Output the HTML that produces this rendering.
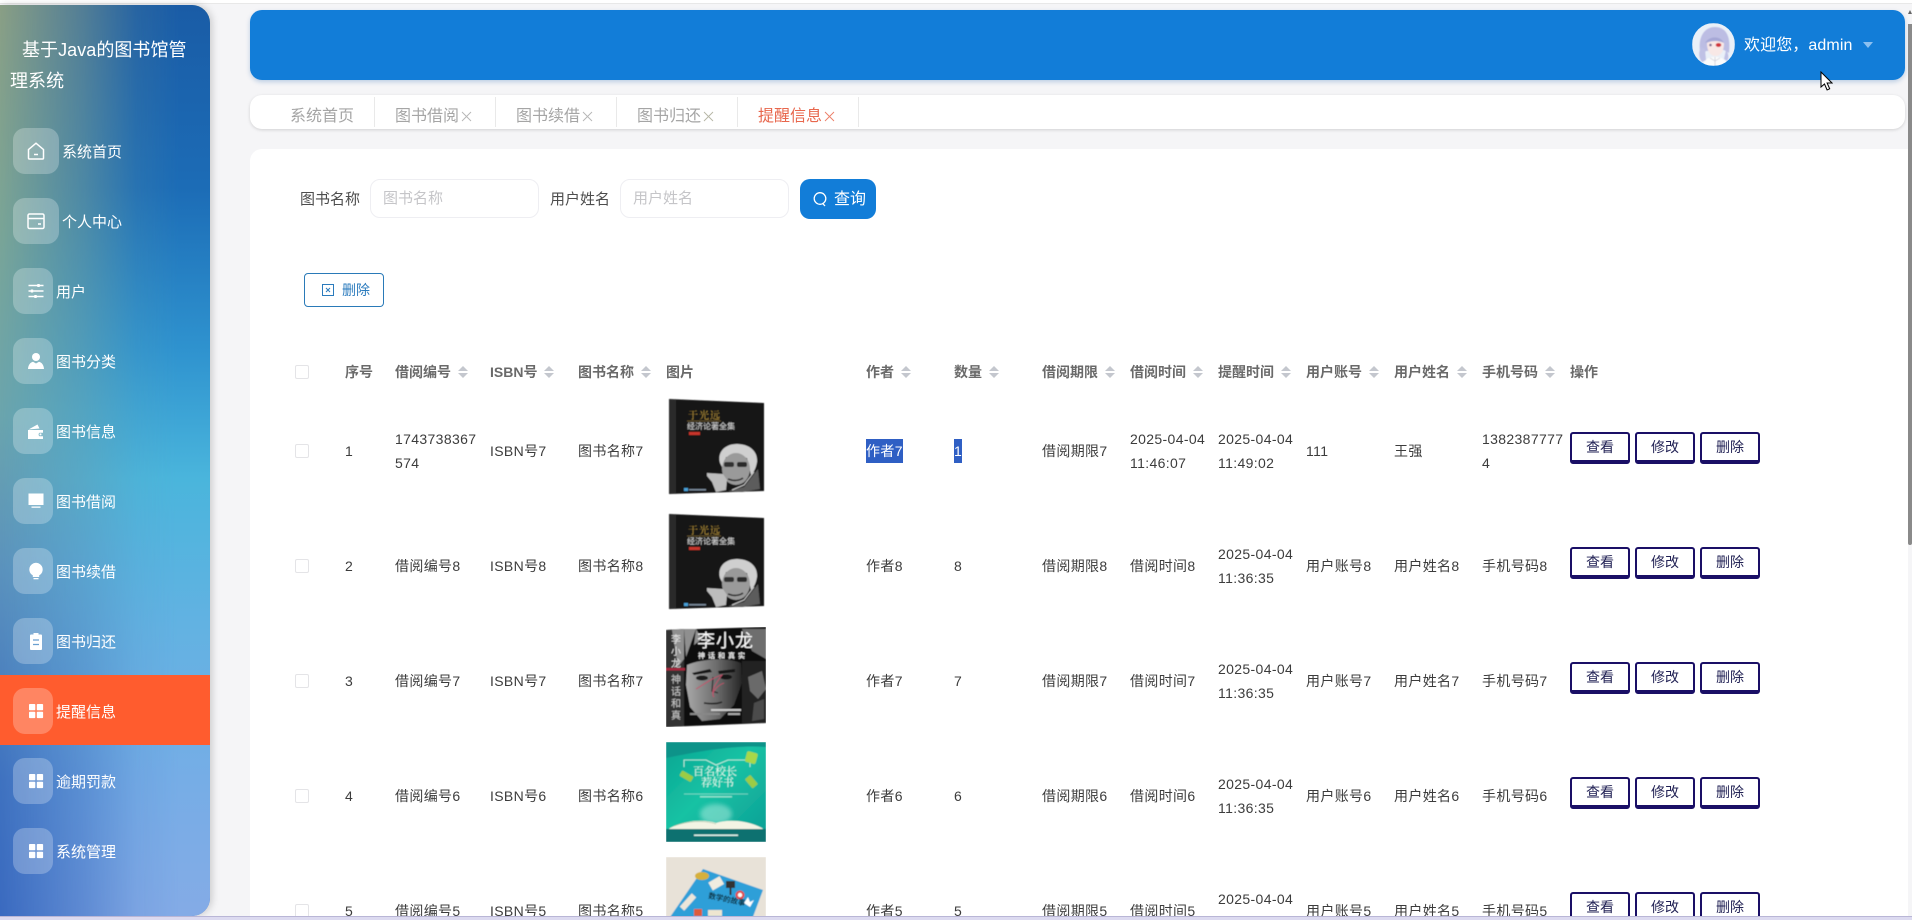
<!DOCTYPE html>
<html lang="zh"><head><meta charset="utf-8"><title>基于Java的图书馆管理系统</title>
<style>
*{box-sizing:border-box}
html,body{margin:0;padding:0;width:1912px;height:920px;overflow:hidden;background:#f5f5f7;font-family:"Liberation Sans","Noto Sans CJK SC",sans-serif}
.abs,.abs>*{position:absolute}
#top{left:0;top:0;width:1912px;height:4px;background:#fff;border-bottom:1px solid #e8e8e8}
#bottom{left:0;top:916px;width:1912px;height:4px;background:#dcdaf0;border-top:1px solid #b9b6d6;z-index:9}
#side{position:absolute;left:0;top:5px;width:210px;height:911px;border-radius:0 18px 18px 0;overflow:hidden;box-shadow:2px 0 8px rgba(0,0,0,.18);z-index:3;background:linear-gradient(180deg,#8a9f85 0%,#7aa597 25%,#6ba5ad 45%,#5b92bd 62%,#3f72c0 85%,#3a6ac0 100%)}
#side .ov{position:absolute;inset:0;background:linear-gradient(180deg,#1a5ca6 0%,#1c6cb6 20%,#2f93cf 38%,#4ab5dc 52%,#62b2e2 68%,#76ade6 85%,#84abe6 100%);-webkit-mask-image:linear-gradient(90deg,rgba(0,0,0,0) 0%,rgba(0,0,0,.5) 40%,rgba(0,0,0,.88) 65%,#000 85%);mask-image:linear-gradient(90deg,rgba(0,0,0,0) 0%,rgba(0,0,0,.5) 40%,rgba(0,0,0,.88) 65%,#000 85%)}
#title{position:absolute;left:10px;top:30px;width:190px;color:#fff;font-size:18px;line-height:31px;text-indent:12px;white-space:normal;letter-spacing:.05px}
.act{position:absolute;left:0;top:670px;width:210px;height:70px;background:#ff5c2e}
.ib{position:absolute;left:13px;width:40px;height:46px;border-radius:12px;background:rgba(255,255,255,.25)}
.ib.w{width:46px}
.ib svg{position:absolute;left:14px;top:14px;width:18px;height:18px}
.mt{position:absolute;left:56px;color:#fff;font-size:15px;line-height:20px;white-space:nowrap;margin-top:1.500px}
#hd{left:250px;top:10px;width:1655px;height:70px;background:#127dd8;border-radius:12px;box-shadow:0 2px 5px rgba(18,90,170,.25)}
#welcome{position:absolute;left:1744px;top:34px;color:#fff;font-size:16px;line-height:24px;white-space:nowrap;z-index:4;letter-spacing:.1px}
#tabs{left:250px;top:95px;width:1655px;height:34px;background:#fff;border-radius:12px;box-shadow:0 1px 3px rgba(0,0,0,.15)}
.tab{position:absolute;top:2px;height:30px;border-right:1px solid #e9e9e9;font-size:16px;line-height:39px;color:#a5a5a5;white-space:nowrap}
.x{display:inline-block;width:11px;height:11px;margin-left:2px;vertical-align:-1px}
.x svg{display:block;width:11px;height:11px}
#main{left:250px;top:149px;width:1658px;height:767px;background:#fff;border-radius:12px 0 0 0;overflow:hidden}
.lbl{position:absolute;font-size:15px;line-height:20px;color:#4d4d4d;white-space:nowrap}
.inp{position:absolute;height:39px;top:30px;border:1px solid #eeeef2;border-radius:10px;font-size:15px;color:#c5c5c8;line-height:38px;padding-left:12px;background:#fff}
#q{position:absolute;left:550px;top:30px;width:76px;height:40px;border-radius:10px;background:#127dd8;color:#fff;font-size:16px;line-height:41px;padding-left:34px}
#del{position:absolute;left:54px;top:124px;width:80px;height:34px;border:1px solid #2a7ab8;border-radius:4px;color:#2b7bbd;font-size:14px;line-height:33px;padding-left:37px}
.t{position:absolute;left:-250px;top:-149px;width:1912px;height:920px}
.h{position:absolute;top:362px;font-size:14px;font-weight:700;color:#6a6a6a;line-height:20px;white-space:nowrap}
.s{display:inline-block;width:10px;height:11px;margin-left:7px;vertical-align:-1px;position:relative}
.s:before,.s:after{content:"";position:absolute;left:0;border-left:5px solid transparent;border-right:5px solid transparent}
.s:before{top:-1px;border-bottom:5px solid #c4c7ce}
.s:after{top:6px;border-top:5px solid #c4c7ce}
.cb{position:absolute;left:295px;width:14px;height:14px;border:1px solid #e4e4e7;border-radius:2px;background:#fff}
.r{position:absolute;left:0;height:0;width:1912px}
.c{position:absolute;top:0;transform:translateY(-50%);line-height:24px;font-size:14px;color:#3c3c3c;white-space:nowrap;letter-spacing:.35px}
.c .sel{background:#2f5fc4;color:#fff;display:inline-block;height:24px}
.b{position:absolute;width:60px;height:32px;top:-19px;border:2px solid #1a0f66;border-bottom-width:4px;border-radius:3px;background:#fff;text-align:center;font-size:14px;line-height:26px;color:#222255}
.b1{left:1570px}.b2{left:1635px}.b3{left:1700px}
.img{position:absolute;left:666px;width:100px;height:100px;overflow:hidden}
.img svg{display:block;width:100px;height:100px}
#sb{position:absolute;left:1908px;top:24px;width:4px;height:521px;background:#8a8a8a;border-radius:0 0 2px 2px;z-index:5}
#sba{position:absolute;left:1908px;top:10px;width:0;height:0;border-left:2px solid transparent;border-right:2px solid transparent;border-bottom:4px solid #666;z-index:5}
</style></head><body>
<svg width="0" height="0" style="position:absolute"><defs>
 <filter id="bl" x="-5%" y="-5%" width="110%" height="110%"><feGaussianBlur stdDeviation=".6"/></filter>
 <filter id="bl2" x="-30%" y="-30%" width="160%" height="160%"><feGaussianBlur stdDeviation="2.500"/></filter>
 <linearGradient id="tg" x1="0" y1="0" x2="1" y2="1"><stop offset="0" stop-color="#09a592"/><stop offset=".45" stop-color="#17c2a4"/><stop offset="1" stop-color="#0d9d95"/></linearGradient>
 <linearGradient id="fg" x1="0" y1="0" x2="1" y2="0"><stop offset="0" stop-color="#a8a8a8"/><stop offset=".55" stop-color="#6c6c6c"/><stop offset="1" stop-color="#262626"/></linearGradient>
</defs></svg>
<div id="top" class="abs" style="position:absolute"></div>

<div id="side">
 <div class="ov"></div>
 <div id="title">基于Java的图书馆管理系统</div>
 <div class="act"></div>

 <div class="ib w" style="top:123px"><svg viewBox="0 0 18 18" fill="none" stroke="#fff" stroke-width="1.500"><path d="M1.500 7.600 9 1.200l7.500 6.400V16a1 1 0 0 1-1 1H2.500a1 1 0 0 1-1-1Z"/><path d="M7 12.500h4"/></svg></div>
 <div class="mt" style="left:62px;top:136px">系统首页</div>
 <div class="ib w" style="top:193px"><svg viewBox="0 0 18 18" fill="none" stroke="#fff" stroke-width="1.500"><rect x="1" y="2" width="16" height="14.500" rx="1.500"/><path d="M1 6.500h16M11 12h3"/></svg></div>
 <div class="mt" style="left:62px;top:206px">个人中心</div>
 <div class="ib" style="top:263px"><svg viewBox="0 0 18 18" fill="none" stroke="#fff" stroke-width="1.400"><path d="M1.500 3.500h15M1.500 9h15M1.500 14.500h15"/><path d="M11.500 2v3M5 7.500v3M8.500 13v3" stroke-width="2.400"/></svg></div>
 <div class="mt" style="top:276px">用户</div>
 <div class="ib" style="top:333px"><svg viewBox="0 0 18 18" fill="#fff"><circle cx="9" cy="5" r="4"/><path d="M1 17c.3-4 2.200-6.500 5-7.200L9 11.500l3-1.700c2.800.7 4.700 3.200 5 7.200Z"/></svg></div>
 <div class="mt" style="top:346px">图书分类</div>
 <div class="ib" style="top:403px"><svg viewBox="0 0 18 18" fill="#fff"><path d="M1.500 7.500 10.500 2.500l2 4Zm-.5.500h15v2.800h-3.500a2 2 0 0 0 0 3.400H16V17H1Z"/><circle cx="13.500" cy="12.400" r="1"/></svg></div>
 <div class="mt" style="top:416px">图书信息</div>
 <div class="ib" style="top:473px"><svg viewBox="0 0 18 18" fill="#fff"><rect x="1.500" y="1.500" width="15" height="11.500"/><rect x="4.500" y="14.500" width="9" height="1.300"/></svg></div>
 <div class="mt" style="top:486px">图书借阅</div>
 <div class="ib" style="top:543px"><svg viewBox="0 0 18 18" fill="#fff"><path d="M9 .8a6.700 6.700 0 0 1 3.200 12.600V15H5.800v-1.600A6.700 6.700 0 0 1 9 .8Z"/><rect x="6.500" y="16" width="5" height="1.300"/></svg></div>
 <div class="mt" style="top:556px">图书续借</div>
 <div class="ib" style="top:613px"><svg viewBox="0 0 18 18"><path fill="#fff" d="M6.500 1h5v1.500h2.500a1 1 0 0 1 1 1V17a1 1 0 0 1-1 1H4a1 1 0 0 1-1-1V3.500a1 1 0 0 1 1-1h2.500Z"/><path d="M6 8h6M6 12.500h6" stroke="#6a9fd0" stroke-width="1.300"/></svg></div>
 <div class="mt" style="top:626px">图书归还</div>
 <div class="ib" style="top:683px"><svg viewBox="0 0 18 18" fill="#fff"><rect x="2" y="2" width="6.300" height="6.300" rx=".8"/><rect x="9.800" y="2" width="6.300" height="6.300" rx=".8"/><rect x="2" y="9.800" width="6.300" height="6.300" rx=".8"/><rect x="9.800" y="9.800" width="6.300" height="6.300" rx=".8"/></svg></div>
 <div class="mt" style="top:696px">提醒信息</div>
 <div class="ib" style="top:753px"><svg viewBox="0 0 18 18" fill="#fff"><rect x="2" y="2" width="6.300" height="6.300" rx=".8"/><rect x="9.800" y="2" width="6.300" height="6.300" rx=".8"/><rect x="2" y="9.800" width="6.300" height="6.300" rx=".8"/><rect x="9.800" y="9.800" width="6.300" height="6.300" rx=".8"/></svg></div>
 <div class="mt" style="top:766px">逾期罚款</div>
 <div class="ib" style="top:823px"><svg viewBox="0 0 18 18" fill="#fff"><rect x="2" y="2" width="6.300" height="6.300" rx=".8"/><rect x="9.800" y="2" width="6.300" height="6.300" rx=".8"/><rect x="2" y="9.800" width="6.300" height="6.300" rx=".8"/><rect x="9.800" y="9.800" width="6.300" height="6.300" rx=".8"/></svg></div>
 <div class="mt" style="top:836px">系统管理</div>
</div>

<div id="hd" style="position:absolute"></div>
<svg style="position:absolute;left:1692px;top:23px;z-index:4" width="43" height="43" viewBox="0 0 43 43">
 <defs><clipPath id="av"><circle cx="21.500" cy="21.500" r="21.500"/></clipPath></defs>
 <g clip-path="url(#av)"><g filter="url(#bl)">
  <rect width="43" height="43" fill="#eaf0f8"/>
  <path d="M9 33C5 18 10 4 23 4c12 0 16 11 14 26l-5-3-18 1Z" fill="#bcbde3"/>
  <path d="M15 20c3-2 13-3 17 0 0 8-3 13-8.500 13S15 28 15 20Z" fill="#f8e8e6"/>
  <path d="M13 20c4-7 15-8 19 0-6-3-13-3-19 0Z" fill="#a5a7d6"/>
  <path d="M11 43c0-6 5-9 12-9s12 3 12 9Z" fill="#fbfbfb"/>
  <path d="M23 34v9M18 35l5 3 5-3" stroke="#c8c8d4" stroke-width=".7" fill="none"/>
  <ellipse cx="26.500" cy="22" rx="2.800" ry="2" fill="#d0353e"/>
  <circle cx="18.500" cy="22" r="1.300" fill="#7a6a92"/>
  <path d="M9 24c-3 6-2 11 1 15l4-2-1-11ZM34 27c3 4 3 8 1 11l-3-2Z" fill="#bfc1e5"/>
 </g></g>
</svg>
<div id="welcome">欢迎您，admin</div>
<div style="position:absolute;left:1863px;top:42px;width:0;height:0;border-left:5px solid transparent;border-right:5px solid transparent;border-top:6px solid #8cc0f0;z-index:4"></div>

<div id="tabs" style="position:absolute">
 <div class="tab" style="left:0;width:125px;padding-left:40px">系统首页</div>
 <div class="tab" style="left:125px;width:121px;padding-left:20px">图书借阅<span class="x"><svg viewBox="0 0 11 11"><path d="M1 1l9 9M10 1l-9 9" stroke="#b5b5b5" stroke-width=".9"/></svg></span></div>
 <div class="tab" style="left:246px;width:121px;padding-left:20px">图书续借<span class="x"><svg viewBox="0 0 11 11"><path d="M1 1l9 9M10 1l-9 9" stroke="#b5b5b5" stroke-width=".9"/></svg></span></div>
 <div class="tab" style="left:367px;width:121px;padding-left:20px">图书归还<span class="x"><svg viewBox="0 0 11 11"><path d="M1 1l9 9M10 1l-9 9" stroke="#b5b5a5" stroke-width=".9"/></svg></span></div>
 <div class="tab" style="left:488px;width:121px;padding-left:20px;color:#e8674d">提醒信息<span class="x"><svg viewBox="0 0 11 11"><path d="M1 1l9 9M10 1l-9 9" stroke="#ec7e68" stroke-width=".9"/></svg></span></div>
</div>

<div id="main" style="position:absolute">
 <div class="lbl" style="left:50px;top:41px">图书名称</div>
 <div class="inp" style="left:120px;width:169px">图书名称</div>
 <div class="lbl" style="left:300px;top:41px">用户姓名</div>
 <div class="inp" style="left:370px;width:169px">用户姓名</div>
 <div id="q"><svg style="position:absolute;left:12px;top:12px" width="16" height="16" viewBox="0 0 16 16" fill="none" stroke="#fff" stroke-width="1.300"><circle cx="8" cy="7.500" r="5.800"/><path d="M11 12.800 13 15"/></svg>查询</div>
 <div id="del"><svg style="position:absolute;left:17px;top:10px" width="12" height="12" viewBox="0 0 12 12" fill="none" stroke="#2b7bbd" stroke-width="1"><rect x=".5" y=".5" width="11" height="11"/><path d="M4 4l4 4M8 4l-4 4"/></svg>删除</div>

 <div class="t">
  <div class="cb" style="top:365px"></div>
  <div class="h" style="left:345px">序号</div>
  <div class="h" style="left:395px">借阅编号<i class="s"></i></div>
  <div class="h" style="left:490px">ISBN号<i class="s"></i></div>
  <div class="h" style="left:578px">图书名称<i class="s"></i></div>
  <div class="h" style="left:666px">图片</div>
  <div class="h" style="left:866px">作者<i class="s"></i></div>
  <div class="h" style="left:954px">数量<i class="s"></i></div>
  <div class="h" style="left:1042px">借阅期限<i class="s"></i></div>
  <div class="h" style="left:1130px">借阅时间<i class="s"></i></div>
  <div class="h" style="left:1218px">提醒时间<i class="s"></i></div>
  <div class="h" style="left:1306px">用户账号<i class="s"></i></div>
  <div class="h" style="left:1394px">用户姓名<i class="s"></i></div>
  <div class="h" style="left:1482px">手机号码<i class="s"></i></div>
  <div class="h" style="left:1570px">操作</div>

  <div class="cb" style="top:444px"></div><div class="cb" style="top:559px"></div><div class="cb" style="top:674px"></div><div class="cb" style="top:789px"></div><div class="cb" style="top:904px"></div>

  <div class="r" style="top:451px">
   <span class="c" style="left:345px">1</span><span class="c" style="left:395px">1743738367<br>574</span><span class="c" style="left:490px">ISBN号7</span><span class="c" style="left:578px">图书名称7</span>
   <span class="c" style="left:866px"><span class="sel">作者7</span></span><span class="c" style="left:954px"><span class="sel">1</span></span><span class="c" style="left:1042px">借阅期限7</span>
   <span class="c" style="left:1130px">2025-04-04<br>11:46:07</span><span class="c" style="left:1218px">2025-04-04<br>11:49:02</span><span class="c" style="left:1306px">111</span><span class="c" style="left:1394px">王强</span><span class="c" style="left:1482px">1382387777<br>4</span>
   <div class="b b1">查看</div><div class="b b2">修改</div><div class="b b3">删除</div>
  </div>
  <div class="r" style="top:566px">
   <span class="c" style="left:345px">2</span><span class="c" style="left:395px">借阅编号8</span><span class="c" style="left:490px">ISBN号8</span><span class="c" style="left:578px">图书名称8</span>
   <span class="c" style="left:866px">作者8</span><span class="c" style="left:954px">8</span><span class="c" style="left:1042px">借阅期限8</span>
   <span class="c" style="left:1130px">借阅时间8</span><span class="c" style="left:1218px">2025-04-04<br>11:36:35</span><span class="c" style="left:1306px">用户账号8</span><span class="c" style="left:1394px">用户姓名8</span><span class="c" style="left:1482px">手机号码8</span>
   <div class="b b1">查看</div><div class="b b2">修改</div><div class="b b3">删除</div>
  </div>
  <div class="r" style="top:681px">
   <span class="c" style="left:345px">3</span><span class="c" style="left:395px">借阅编号7</span><span class="c" style="left:490px">ISBN号7</span><span class="c" style="left:578px">图书名称7</span>
   <span class="c" style="left:866px">作者7</span><span class="c" style="left:954px">7</span><span class="c" style="left:1042px">借阅期限7</span>
   <span class="c" style="left:1130px">借阅时间7</span><span class="c" style="left:1218px">2025-04-04<br>11:36:35</span><span class="c" style="left:1306px">用户账号7</span><span class="c" style="left:1394px">用户姓名7</span><span class="c" style="left:1482px">手机号码7</span>
   <div class="b b1">查看</div><div class="b b2">修改</div><div class="b b3">删除</div>
  </div>
  <div class="r" style="top:796px">
   <span class="c" style="left:345px">4</span><span class="c" style="left:395px">借阅编号6</span><span class="c" style="left:490px">ISBN号6</span><span class="c" style="left:578px">图书名称6</span>
   <span class="c" style="left:866px">作者6</span><span class="c" style="left:954px">6</span><span class="c" style="left:1042px">借阅期限6</span>
   <span class="c" style="left:1130px">借阅时间6</span><span class="c" style="left:1218px">2025-04-04<br>11:36:35</span><span class="c" style="left:1306px">用户账号6</span><span class="c" style="left:1394px">用户姓名6</span><span class="c" style="left:1482px">手机号码6</span>
   <div class="b b1">查看</div><div class="b b2">修改</div><div class="b b3">删除</div>
  </div>
  <div class="r" style="top:911px">
   <span class="c" style="left:345px">5</span><span class="c" style="left:395px">借阅编号5</span><span class="c" style="left:490px">ISBN号5</span><span class="c" style="left:578px">图书名称5</span>
   <span class="c" style="left:866px">作者5</span><span class="c" style="left:954px">5</span><span class="c" style="left:1042px">借阅期限5</span>
   <span class="c" style="left:1130px">借阅时间5</span><span class="c" style="left:1218px">2025-04-04<br>11:36:35</span><span class="c" style="left:1306px">用户账号5</span><span class="c" style="left:1394px">用户姓名5</span><span class="c" style="left:1482px">手机号码5</span>
   <div class="b b1">查看</div><div class="b b2">修改</div><div class="b b3">删除</div>
  </div>

  <div class="img" style="top:397px"><svg viewBox="0 0 100 100"><g filter="url(#bl)">
   <polygon points="3,2 98,6 98,94 3,97" fill="#141414"/><polygon points="3,2 10,3 10,96 3,97" fill="#2c2c2c"/>
   <path d="M54 66c-3-11 5-19 17-19 12 0 21 7 20 18-1 6-3 10-6 13l-4-17-21-1-3 12Z" fill="#cfcfcf"/>
   <ellipse cx="70" cy="72" rx="14" ry="16" fill="#9a9a9a"/>
   <rect x="58" y="65" width="10" height="5" rx="2" fill="#333"/><rect x="71" y="65" width="10" height="5" rx="2" fill="#2a2a2a"/>
   <path d="M62 82c5 2 11 2 15-1" stroke="#2c2c2c" stroke-width="1.600" fill="none"/>
   <path d="M41 76l16 1 4 6-1 10-10 2-4-10-5-6Z" fill="#bdbdbd"/><path d="M62 94l16-4 14-18 2 20-18 3Z" fill="#5c5c5c"/><path d="M66 93l12-5 10-13" stroke="#cfcfcf" fill="none"/>
   <text x="22" y="22" font-size="10" fill="#b8953c" font-family="Noto Serif CJK SC" letter-spacing="1">于光远</text>
   <path d="M21 24h34" stroke="#a88a40" stroke-width=".5"/>
   <text x="21" y="32" font-size="8" fill="#d8d8d8" font-family="Noto Sans CJK SC">经济论著全集</text>
   <rect x="23" y="35" width="11" height="3" fill="#c8352c"/>
   <rect x="18" y="91" width="4" height="3" fill="#4aa0d8"/><rect x="23" y="92" width="17" height="1.500" fill="#7a8a9a"/>
  </g></svg></div>
  <div class="img" style="top:512px"><svg viewBox="0 0 100 100"><g filter="url(#bl)">
   <polygon points="3,2 98,6 98,94 3,97" fill="#141414"/><polygon points="3,2 10,3 10,96 3,97" fill="#2c2c2c"/>
   <path d="M54 66c-3-11 5-19 17-19 12 0 21 7 20 18-1 6-3 10-6 13l-4-17-21-1-3 12Z" fill="#cfcfcf"/>
   <ellipse cx="70" cy="72" rx="14" ry="16" fill="#9a9a9a"/>
   <rect x="58" y="65" width="10" height="5" rx="2" fill="#333"/><rect x="71" y="65" width="10" height="5" rx="2" fill="#2a2a2a"/>
   <path d="M62 82c5 2 11 2 15-1" stroke="#2c2c2c" stroke-width="1.600" fill="none"/>
   <path d="M41 76l16 1 4 6-1 10-10 2-4-10-5-6Z" fill="#bdbdbd"/><path d="M62 94l16-4 14-18 2 20-18 3Z" fill="#5c5c5c"/><path d="M66 93l12-5 10-13" stroke="#cfcfcf" fill="none"/>
   <text x="22" y="22" font-size="10" fill="#b8953c" font-family="Noto Serif CJK SC" letter-spacing="1">于光远</text>
   <path d="M21 24h34" stroke="#a88a40" stroke-width=".5"/>
   <text x="21" y="32" font-size="8" fill="#d8d8d8" font-family="Noto Sans CJK SC">经济论著全集</text>
   <rect x="23" y="35" width="11" height="3" fill="#c8352c"/>
   <rect x="18" y="91" width="4" height="3" fill="#4aa0d8"/><rect x="23" y="92" width="17" height="1.500" fill="#7a8a9a"/>
  </g></svg></div>
  <div class="img" style="top:627px"><svg viewBox="0 0 100 100"><g filter="url(#bl)">
   <polygon points="0,3 100,0 100,96 0,100" fill="#0e0e0e"/>
   <polygon points="0,3 18,2 18,99 0,100" fill="#333"/>
   <path d="M6 3 18 2v30l-6 8ZM18 2h12L20 30ZM30 2l6 10-8 6Z" fill="#8f8f8f"/>
   <path d="M76 2h24v30l-14-8Z" fill="#6e6e6e"/>
   <rect x="76" y="34" width="24" height="62" fill="#242424"/><path d="M82 50l14-6 4 18-8 10-8-8Z" fill="#6a6a6a"/><path d="M88 76l10-4v20l-12 2Z" fill="#4c4c4c"/>
   <path d="M21 38c14-6 40-8 54-2l1 20-8 22-14 14-18 2-12-14-4-22Z" fill="url(#fg)"/>
   <path d="M26 46l18-4 2 3-18 3ZM52 44l17-2v3l-16 2Z" fill="#151515"/>
   <ellipse cx="36" cy="51" rx="6" ry="2.500" fill="#1c1c1c"/><ellipse cx="60" cy="50" rx="6" ry="2.500" fill="#121212"/>
   <path d="M47 50l-1 14 6 2" stroke="#333" stroke-width="1.300" fill="none"/><path d="M38 76c6 1 13 1 18-1" stroke="#222" stroke-width="1.600" fill="none"/>
   <path d="M30 62c10-6 18-12 26-14-6 8-12 16-8 22-4-4 4-12 10-14" fill="none" stroke="#c2506a" stroke-width=".9"/>
   <rect x="45" y="82" width="30" height="2" fill="#ccc"/><rect x="62" y="86" width="12" height="2" fill="#aaa"/><rect x="24" y="86" width="30" height="2" fill="#888"/>
   <rect x="0" y="41" width="19" height="2.500" fill="#a6283c"/>
   <text x="31" y="20" font-size="18" fill="#fff" font-family="Noto Sans CJK SC" letter-spacing="1">李小龙</text>
   <text x="32" y="31" font-size="7" font-weight="700" fill="#eee" font-family="Noto Sans CJK SC" letter-spacing="3">神话和真实</text>
   <text x="5" y="16" font-size="10" fill="#e6e6e6" font-family="Noto Sans CJK SC">李</text>
   <text x="5" y="28" font-size="10" fill="#e6e6e6" font-family="Noto Sans CJK SC">小</text>
   <text x="5" y="40" font-size="10" fill="#e6e6e6" font-family="Noto Sans CJK SC">龙</text>
   <text x="5" y="56" font-size="10" fill="#ccc" font-family="Noto Sans CJK SC">神</text>
   <text x="5" y="68" font-size="10" fill="#ccc" font-family="Noto Sans CJK SC">话</text>
   <text x="5" y="80" font-size="10" fill="#ccc" font-family="Noto Sans CJK SC">和</text>
   <text x="5" y="92" font-size="10" fill="#ccc" font-family="Noto Sans CJK SC">真</text>
  </g></svg></div>
  <div class="img" style="top:742px"><svg viewBox="0 0 100 100"><g filter="url(#bl)">
   <rect width="100" height="100" fill="url(#tg)"/>
   <path d="M0 0h100v5C70 3 40 8 0 16Z" fill="#0a9389"/>
   <path d="M18 25v-7h22l10 5 12-5h22v7" fill="none" stroke="#d4f5e8" stroke-width=".8"/>
   <path d="M18 52h64" stroke="#c4f0e2" stroke-width=".5"/>
   <rect x="80" y="10" width="11" height="11" rx="2" fill="#a8d84a" transform="rotate(15 85 15)"/>
   <rect x="14" y="31" width="13" height="6" rx="1" fill="#9ccc45" transform="rotate(30 20 34)"/>
   <rect x="79" y="36" width="12" height="7" rx="1" fill="#9ccc45" transform="rotate(50 85 40)"/>
   <text x="27" y="33" font-size="11" fill="#e8fff4" font-family="Noto Serif CJK SC">百名校长</text>
   <text x="35" y="44" font-size="11" fill="#e8fff4" font-family="Noto Serif CJK SC">荐好书</text>
   <rect x="34" y="54" width="32" height="1.500" fill="#bff0dd" opacity=".7"/>
   <ellipse cx="50" cy="72" rx="16" ry="10" fill="#c8f6ea" opacity=".45" filter="url(#bl2)"/>
   <path d="M4 86c15-8 34-9 46-5 12-4 31-3 46 5l1 1H3Z" fill="#f4f4e4"/>
   <path d="M8 84c14-5 30-6 42-2" stroke="#9fb89a" stroke-width=".5" fill="none"/>
   <rect y="87" width="100" height="13" fill="#08716f"/>
   <rect x="28" y="92.500" width="44" height="1.500" fill="#d8f0e8"/>
  </g></svg></div>
  <div class="img" style="top:857px"><svg viewBox="0 0 100 100"><g filter="url(#bl)">
   <rect width="100" height="100" fill="#e8e2d8"/>
   <polygon points="37,12 97,33 72,100 0,100 0,66" fill="#2f9fd8"/>
   <ellipse cx="36" cy="19" rx="7" ry="4" fill="#d6b03a"/>
   <rect x="44" y="22" width="13" height="9" fill="#f1ece0" transform="rotate(-30 50 27)"/>
   <rect x="60" y="24" width="9" height="7" fill="#333"/><rect x="63.500" y="30" width="2" height="8" fill="#333"/>
   <circle cx="74" cy="38" r="4.500" fill="#e34d4d"/><circle cx="74" cy="38" r="2.200" fill="#fff"/>
   <path d="M78 46l4-6 2 5 4-2-4 7Z" fill="#fff"/>
   <text x="42" y="41" font-size="7.500" font-weight="700" fill="#10303f" font-family="Noto Sans CJK SC" transform="rotate(12 42 41)">数学的故事</text>
   <rect x="13" y="42" width="18" height="6" fill="#ece6da" transform="rotate(-48 22 45)"/>
   <rect x="28" y="52" width="8" height="7" fill="#dd5c3a"/><rect x="42" y="53" width="14" height="6" fill="#eee6d0"/>
  </g></svg></div>
 </div>
</div>

<div id="sba"></div><div id="sb"></div>
<svg style="position:absolute;left:1820px;top:71px;z-index:6" width="13" height="21" viewBox="0 0 13 21"><path d="M1 1v15l3.500-3 2.600 6 2.600-1.200-2.600-5.800H12Z" fill="#fff" stroke="#000" stroke-width="1"/></svg>
<div id="bottom" class="abs" style="position:absolute"></div>
</body></html>
